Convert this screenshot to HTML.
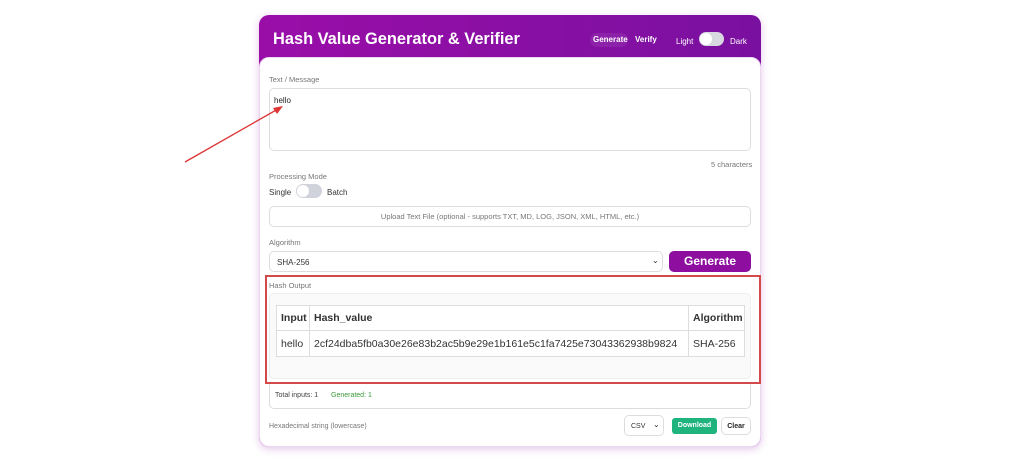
<!DOCTYPE html>
<html><head><meta charset="utf-8"><style>
*{box-sizing:border-box;margin:0;padding:0}
body{width:1024px;height:463px;background:#fff;font-family:"Liberation Sans",sans-serif;position:relative;overflow:hidden;color:#333}
.a{position:absolute}
.card{left:259px;top:15px;width:502px;height:432px;border-radius:10px;background:linear-gradient(90deg,#9a0ea8,#7a10a0);box-shadow:0 2px 8px rgba(170,60,190,.3)}
.body{left:259px;top:57px;width:502px;height:390px;background:#fff;border-radius:10px;border:1px solid #ead8ef}
.lbl{font-size:7.5px;color:#777}
.box{border:1px solid #ddd;border-radius:5px;background:#fff}
td,th{border:1px solid #ddd;padding-left:4px;text-align:left;white-space:nowrap}
</style></head><body>
<div class="a card"></div>
<div class="a" style="left:273px;top:30px;font-size:16.4px;font-weight:bold;color:#fff">Hash Value Generator &amp; Verifier</div>
<div class="a" style="left:590px;top:33px;width:38px;height:14px;border-radius:7px;background:rgba(255,255,255,.08)"></div>
<div class="a" style="left:593px;top:35px;font-size:8px;font-weight:bold;color:#fff">Generate</div>
<div class="a" style="left:635px;top:35px;font-size:8px;font-weight:bold;color:#fff">Verify</div>
<div class="a" style="left:676px;top:37px;font-size:8px;color:#fff">Light</div>
<div class="a" style="left:699px;top:32px;width:25px;height:14px;border-radius:7px;background:#d8d8e0"></div>
<div class="a" style="left:700px;top:33px;width:12px;height:12px;border-radius:6px;background:#fff"></div>
<div class="a" style="left:730px;top:37px;font-size:8px;color:#fff">Dark</div>
<div class="a body"></div>
<div class="a lbl" style="left:269px;top:75px">Text / Message</div>
<div class="a box" style="left:269px;top:88px;width:482px;height:63px"></div>
<div class="a" style="left:274px;top:96px;font-size:8px;color:#222">hello</div>
<div class="a lbl" style="left:711px;top:160px">5 characters</div>
<div class="a lbl" style="left:269px;top:172px">Processing Mode</div>
<div class="a" style="left:269px;top:188px;font-size:8px">Single</div>
<div class="a" style="left:296px;top:184px;width:26px;height:14px;border-radius:7px;background:#d0d3dc"></div>
<div class="a" style="left:297px;top:185px;width:12px;height:12px;border-radius:6px;background:#fff"></div>
<div class="a" style="left:327px;top:188px;font-size:8px">Batch</div>
<div class="a box" style="left:269px;top:206px;width:482px;height:21px"></div>
<div class="a lbl" style="left:269px;top:212px;width:482px;text-align:center">Upload Text File (optional - supports TXT, MD, LOG, JSON, XML, HTML, etc.)</div>
<div class="a lbl" style="left:269px;top:238px">Algorithm</div>
<div class="a box" style="left:269px;top:251px;width:394px;height:21px"></div>
<div class="a" style="left:277px;top:258px;font-size:8px">SHA-256</div>
<div class="a" style="left:652px;top:256px;font-size:8px">⌄</div>
<div class="a" style="left:669px;top:251px;width:82px;height:21px;border-radius:5px;background:#8e0ea0;color:#fff;font-weight:bold;font-size:12px;text-align:center;line-height:21px">Generate</div>
<div class="a" style="left:265px;top:275px;width:496px;height:109px;border:2px solid #d24a4a"></div>
<div class="a lbl" style="left:269px;top:281px">Hash Output</div>
<div class="a" style="left:269px;top:293px;width:482px;height:86px;background:#fafafa;border:1px solid #eee;border-radius:5px"></div>
<table class="a" style="left:276px;top:305px;width:468px;table-layout:fixed;border-collapse:collapse;font-size:10.5px;background:#fff;color:#333">
<colgroup><col style="width:33px"><col style="width:379px"><col style="width:56px"></colgroup>
<tr style="height:25px"><th>Input</th><th>Hash_value</th><th>Algorithm</th></tr>
<tr style="height:26px"><td>hello</td><td>2cf24dba5fb0a30e26e83b2ac5b9e29e1b161e5c1fa7425e73043362938b9824</td><td>SHA-256</td></tr>
</table>
<div class="a box" style="left:269px;top:384px;width:482px;height:25px;border-top:none;border-radius:0 0 5px 5px"></div>
<div class="a" style="left:275px;top:392px;font-size:7px;color:#444">Total inputs: 1</div>
<div class="a" style="left:331px;top:392px;font-size:7px;color:#3a9a3a">Generated: 1</div>
<div class="a lbl" style="left:269px;top:423px;font-size:7px">Hexadecimal string (lowercase)</div>
<div class="a box" style="left:624px;top:415px;width:40px;height:21px"></div>
<div class="a" style="left:631px;top:423px;font-size:7px">CSV</div>
<div class="a" style="left:653px;top:420px;font-size:8px">⌄</div>
<div class="a" style="left:672px;top:418px;width:45px;height:16px;border-radius:3px;background:#1fb37e;color:#fff;font-size:7px;font-weight:bold;text-align:center;line-height:16px">Download</div>
<div class="a box" style="left:721px;top:417px;width:30px;height:18px;font-size:7px;font-weight:bold;text-align:center;line-height:17px;color:#222">Clear</div>
<svg class="a" style="left:0;top:0" width="1024" height="463"><line x1="185" y1="162" x2="278" y2="109" stroke="#d33" stroke-width="1.3"/><polygon points="283,106 273,108 277,114" fill="#d33"/></svg>
</body></html>
